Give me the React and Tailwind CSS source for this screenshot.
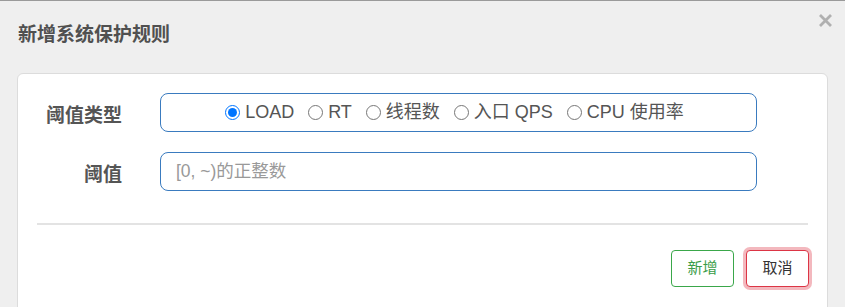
import { useState } from "react";

const TYPES = ["LOAD", "RT", "线程数", "入口 QPS", "CPU 使用率"];

export default function App() {
  const [type, setType] = useState("LOAD");

  return (
    <div className="w-[845px] h-[307px] overflow-hidden bg-[#efefef] border-t border-[#9a9a9a] text-[#555] font-['Liberation_Sans','Noto_Sans_CJK_SC',sans-serif]">
      {/* header */}
      <div className="h-[72px] flex items-start justify-between pl-[18px] pr-[12px]">
        <h3 className="mt-[24px] text-[19px] font-bold text-[#505050] leading-none">新增系统保护规则</h3>
        <button className="mt-[12px] w-[15px] h-[15px] text-[#b0b0b0]">
          <svg viewBox="0 0 15 15" width="15" height="15">
            <path d="M2 2 L13 13 M13 2 L2 13" stroke="currentColor" strokeWidth="2.8" />
          </svg>
        </button>
      </div>

      {/* body */}
      <div className="mx-[17px] h-[240px] bg-white border border-[#dcdcdc] rounded-[6px] pt-[19px]">
        <div className="flex items-center">
          <label className="w-[104px] text-right text-[19px] font-bold pt-[7px]">阈值类型</label>
          <div className="ml-[38px] w-[597px] h-[39px] border border-[#3a7bbf] rounded-[8px] flex items-center justify-center gap-[14px] text-[18px] pr-[8px]">
            {TYPES.map((t) => (
              <label key={t} className="flex items-center gap-[5px] cursor-pointer">
                <input
                  type="radio"
                  name="grade"
                  checked={type === t}
                  onChange={() => setType(t)}
                  className="w-[15px] h-[15px] m-0"
                />
                <span>{t}</span>
              </label>
            ))}
          </div>
        </div>

        <div className="flex items-center mt-[20px]">
          <label className="w-[104px] text-right text-[19px] font-bold pt-[7px]">阈值</label>
          <input
            type="text"
            placeholder="[0, ~)的正整数"
            className="ml-[38px] w-[597px] h-[39px] border border-[#3a7bbf] rounded-[8px] px-[15px] text-[17.5px] outline-none placeholder:text-[#999]"
          />
        </div>

        <div className="mx-[19px] mt-[32px] h-[2px] bg-[#e3e3e3]" />

        <div className="flex justify-end gap-[12px] mr-[18px] mt-[25px]">
          <button className="w-[63px] h-[37px] rounded-[4px] border border-[#3aa74a] text-[#3a9d48] text-[15px] bg-white">
            新增
          </button>
          <button className="w-[63px] h-[37px] rounded-[4px] border border-[#dc3545] text-[#333] text-[15px] bg-white shadow-[0_0_0_3px_rgba(220,53,69,0.35)]">
            取消
          </button>
        </div>
      </div>
    </div>
  );
}
